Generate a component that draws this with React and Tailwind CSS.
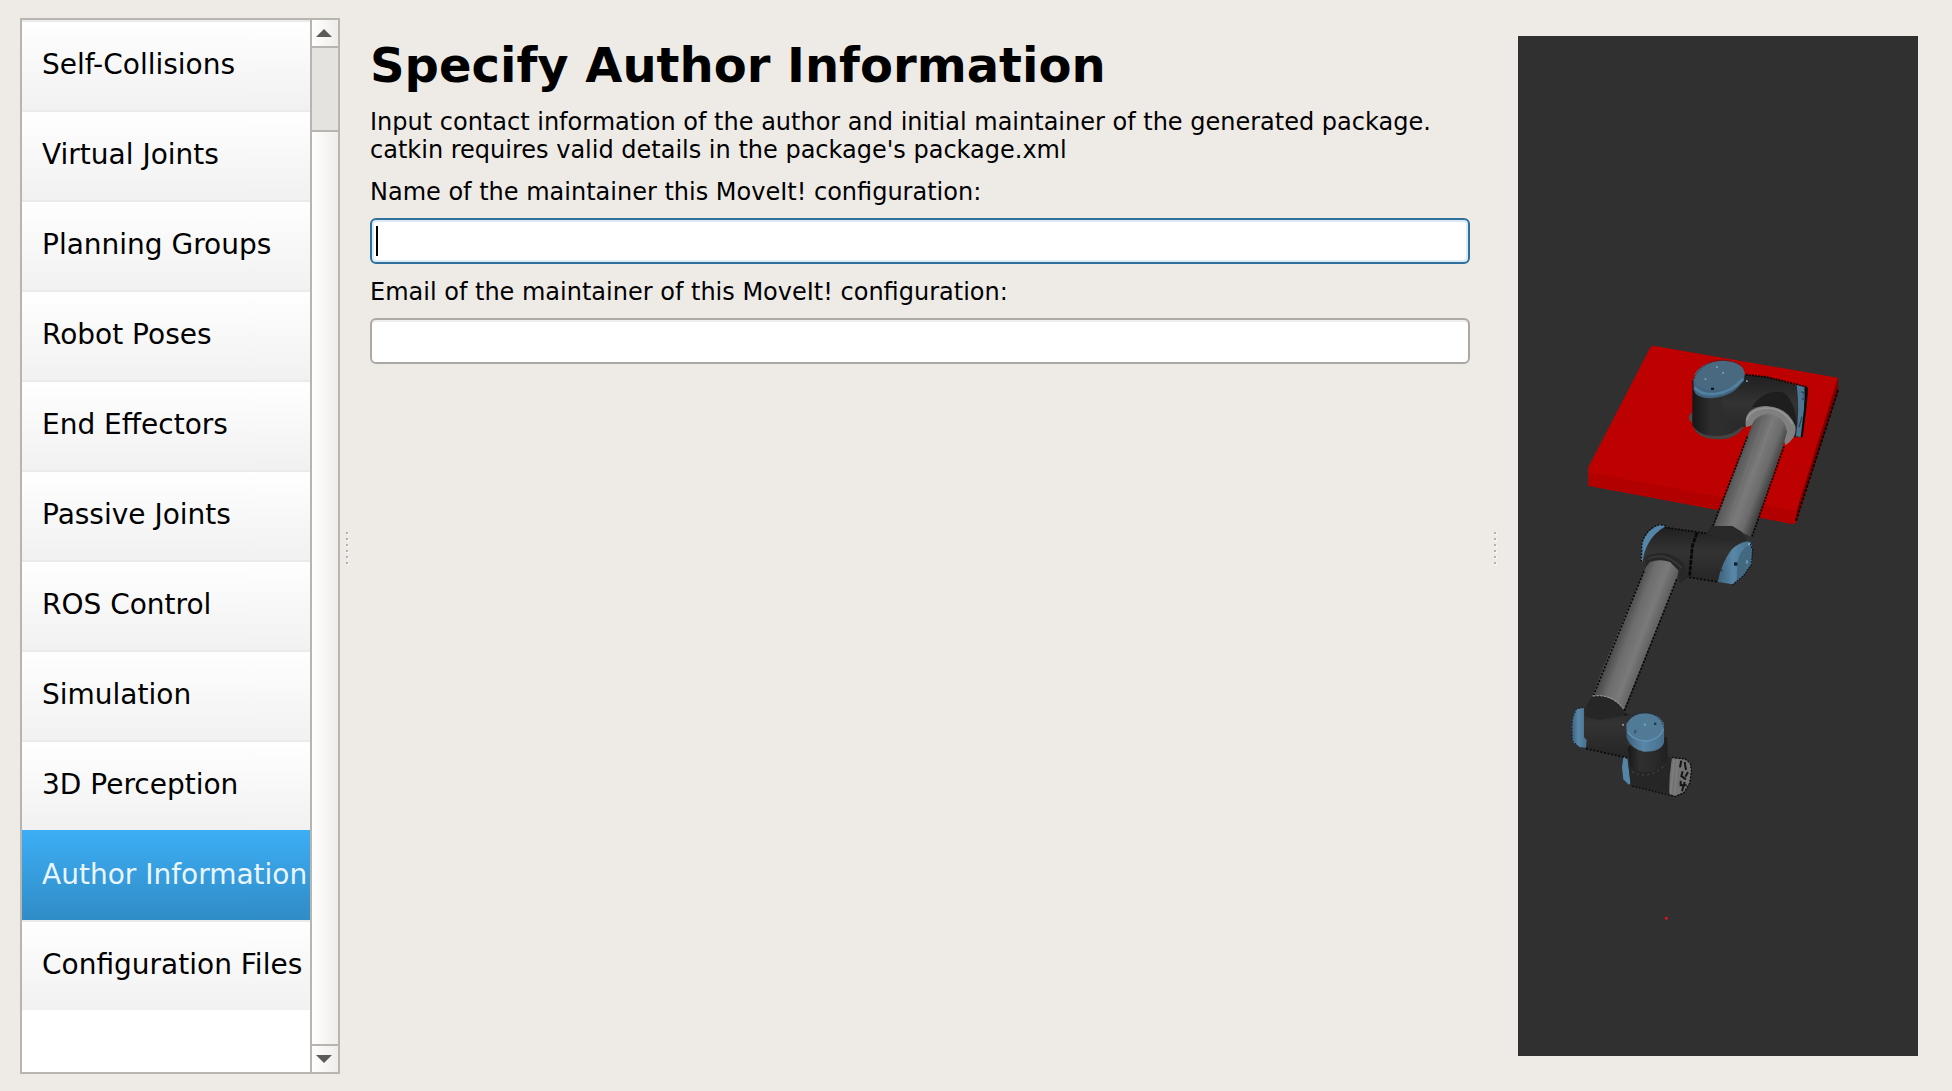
import React, { useState } from 'react';

const steps = [
  'Self-Collisions',
  'Virtual Joints',
  'Planning Groups',
  'Robot Poses',
  'End Effectors',
  'Passive Joints',
  'ROS Control',
  'Simulation',
  '3D Perception',
  'Author Information',
  'Configuration Files',
];

function ScrollBar() {
  return (
    <div className="flex w-7 shrink-0 flex-col border-l-2 border-[#b8b5b1] bg-gradient-to-r from-white to-[#efede9]">
      <button aria-label="Scroll up" className="flex h-7 items-center justify-center border-b-2 border-[#b8b5b1] pr-0.5">
        <svg className="h-2 w-4" viewBox="0 0 16 8" aria-hidden="true">
          <path d="M0 8 8 0 16 8Z" fill="#5b5a58" />
        </svg>
      </button>
      <div className="h-[84px] border-b-2 border-[#b8b5b1] bg-[#e4e3df]" />
      <div className="flex-1" />
      <button aria-label="Scroll down" className="flex h-7 items-center justify-center border-t-2 border-[#b8b5b1] pr-0.5">
        <svg className="h-2 w-4" viewBox="0 0 16 8" aria-hidden="true">
          <path d="M0 0 8 8 16 0Z" fill="#5b5a58" />
        </svg>
      </button>
    </div>
  );
}

function StepList({ current, onSelect }) {
  return (
    <nav className="flex w-80 shrink-0 border-2 border-[#b8b5b1] bg-white">
      <ul className="min-w-0 flex-1">
        {steps.map((step) => (
          <li key={step}>
            <button
              onClick={() => onSelect(step)}
              aria-current={step === current ? 'step' : undefined}
              className={
                step === current
                  ? 'flex h-[90px] w-full items-center whitespace-nowrap bg-gradient-to-b from-[#3daef5] to-[#308cc6] pl-5 text-[28px] text-[#eaf6ff]'
                  : 'flex h-[90px] w-full items-center whitespace-nowrap bg-gradient-to-b from-white to-[#f1f1f1] pl-5 text-[28px] shadow-[inset_0_2px_0_#ebebeb]'
              }
            >
              {step}
            </button>
          </li>
        ))}
      </ul>
      <ScrollBar />
    </nav>
  );
}

function Splitter() {
  return (
    <div className="flex w-3.5 shrink-0 flex-col items-center justify-center gap-1 pt-1" role="separator" aria-orientation="vertical">
      {[0, 1, 2, 3, 4, 5].map((n) => (
        <span key={n} className="size-0.5 bg-[#b5b2ae] shadow-[1px_1px_0_#fbfaf8]" />
      ))}
    </div>
  );
}

function RobotView() {
  return (
    <svg className="h-full w-full" viewBox="0 0 1200 3060" preserveAspectRatio="xMidYMid slice" role="img" aria-label="Robot arm preview">
      <defs>
        <linearGradient id="upperTube" gradientUnits="userSpaceOnUse" x1="490" y1="400" x2="610" y2="446">
          <stop offset="0" stopColor="#3c3c3c" />
          <stop offset="0.15" stopColor="#5c5c5c" />
          <stop offset="0.5" stopColor="#7a7a7a" />
          <stop offset="0.75" stopColor="#6c6c6c" />
          <stop offset="1" stopColor="#3a3a3a" />
        </linearGradient>
        <linearGradient id="lowerTube" gradientUnits="userSpaceOnUse" x1="195" y1="330" x2="312" y2="374">
          <stop offset="0" stopColor="#444" />
          <stop offset="0.3" stopColor="#6c6c6c" />
          <stop offset="0.6" stopColor="#7a7a7a" />
          <stop offset="0.85" stopColor="#606060" />
          <stop offset="1" stopColor="#333" />
        </linearGradient>
        <linearGradient id="shoulder" x1="0" y1="0" x2="1" y2="0">
          <stop offset="0" stopColor="#161616" />
          <stop offset="0.3" stopColor="#2f2f2f" />
          <stop offset="0.65" stopColor="#2b2b2b" />
          <stop offset="1" stopColor="#202020" />
        </linearGradient>
        <linearGradient id="housing" x1="0" y1="0" x2="0" y2="1">
          <stop offset="0" stopColor="#1f1f1f" />
          <stop offset="0.45" stopColor="#333" />
          <stop offset="1" stopColor="#252525" />
        </linearGradient>
        <linearGradient id="cap" x1="0" y1="0" x2="1" y2="0">
          <stop offset="0" stopColor="#3d6079" />
          <stop offset="0.45" stopColor="#5987a8" />
          <stop offset="1" stopColor="#466f8c" />
        </linearGradient>
      </defs>

      {/* base plate, shoulder and upper arm */}
      <g transform="translate(156 882)">
        <path d="M250 47 803 143V180L680 575 668 582 55 467V412L240 54Z" fill="#bd0000" />
        <path d="M62 428 678 542 672 582 55 467Z" fill="#b20000" />
        <path d="M803 145 805 182 676 578 680 540Z" fill="#7e0000" />
        <path d="M804 180 678 572" stroke="#100" strokeWidth="6" strokeDasharray="9 4" />
        <path d="M368 245q-16 12-10 26l14 10Z" fill="#4b4b4b" />
        <path d="M368 262V288Q385 328 442 328T522 290Z" fill="#444" />
        <path d="M367 150V286Q388 319 440 319 490 318 520 286L560 240 524 135Z" fill="url(#shoulder)" />
        <path d="M455 200 524 134 588 140 678 165 712 172 694 322 640 320 560 260 525 292Q480 290 462 262Z" fill="url(#housing)" />
        <path d="M545 232Q580 178 635 186 672 200 682 290L650 262 590 228Z" fill="#1e1e1e" />
        <path d="M528 134 590 141 680 163 712 172 708 225" stroke="#050505" strokeWidth="5" strokeDasharray="6 3" fill="none" />
        <path d="M680 165 704 172 706 222 694 322 678 318Q690 240 680 165Z" fill="#4d7591" />
        <path d="M704 172 713 177 709 236 698 322 692 322 702 236Z" fill="#0b0b0b" />
        <path d="M694 185 703 190V210L696 205M687 292 696 260" stroke="#25465c" strokeWidth="4" fill="none" />
        <path d="M370 146 371 180Q378 204 420 205 468 202 496 180L522 152 524 125Z" fill="#416580" />
        <ellipse cx="448" cy="137" rx="76" ry="44" transform="rotate(-8 448 137)" fill="#496980" />
        <path d="M374 172Q392 196 436 192 486 186 519 146" stroke="#52809f" strokeWidth="8" fill="none" />
        <path d="M372 146Q390 108 430 94 480 84 516 108" stroke="#162b38" strokeWidth="3" strokeDasharray="4 4" fill="none" />
        <g fill="#78a8c8">
          <rect x="438" y="109" width="5" height="5" />
          <rect x="457" y="126" width="5" height="5" />
          <rect x="404" y="145" width="5" height="5" />
          <rect x="528" y="151" width="5" height="5" />
        </g>
        <rect x="423" y="173" width="9" height="7" fill="#0d161c" />
        <path d="M528 292Q518 232 588 228 652 230 676 288 682 324 646 346L630 290 550 284Z" fill="#808080" />
        <path d="M530 272Q538 238 588 234 640 234 668 282" stroke="#959595" strokeWidth="5" fill="none" />
        <path d="M546 284Q556 256 592 252 640 254 651 305L640 346 545 622 500 600 430 590Z" fill="url(#upperTube)" />
        <path d="M580 270 480 560M606 270 506 570" stroke="#8a8a8a" strokeWidth="2" opacity="0.4" />
        <path d="M532 320 426 596M642 350 545 622" stroke="#050505" strokeWidth="5" strokeDasharray="6 4" fill="none" />
      </g>

      {/* elbow */}
      <g transform="translate(126 1392)">
        <path d="M318 78 300 74Q262 84 246 130L243 186 262 180 318 84Z" fill="#5484a6" />
        <path d="M244 185 246 128Q262 82 300 74L318 78" stroke="#0a0f12" strokeWidth="4" strokeDasharray="5 5" fill="none" />
        <path d="M312 82 405 96 440 100 456 78 515 78 545 95 560 122 510 150 474 246 385 232 360 250 352 210Q330 180 290 180L258 205 247 190Q256 116 312 82Z" fill="url(#housing)" />
        <path d="M442 102 458 78 518 79 548 98 560 124 500 120Z" fill="#292929" />
        <path d="M258 170Q320 140 372 190L384 232 358 248 352 208Q330 180 290 180L256 205Z" fill="#272727" />
        <path d="M262 178Q315 150 366 205" stroke="#383838" strokeWidth="5" fill="none" />
        <path d="M314 82 440 100" stroke="#080808" strokeWidth="5" strokeDasharray="6 4" />
        <path d="M411 98 397 138 389 226" stroke="#080808" strokeWidth="8" strokeDasharray="14 3" fill="none" />
        <path d="M388 232 474 246" stroke="#080808" strokeWidth="5" strokeDasharray="6 5" />
        <path d="M570 122Q530 128 512 152 484 190 473 246L518 253 548 228 575 190 576 140Z" fill="url(#cap)" />
        <path d="M566 136Q538 150 532 190L530 246 552 224 575 186 574 140Z" fill="#426981" />
        <path d="M566 124 578 150 574 196 550 228 518 254" stroke="#081016" strokeWidth="4" strokeDasharray="4 5" fill="none" />
        <rect x="522" y="187" width="10" height="10" fill="#10202c" />
        <rect x="558" y="181" width="6" height="10" fill="#6796b5" />
        <rect x="564" y="128" width="6" height="8" fill="#76a9ca" />
        <rect x="483" y="209" width="5" height="5" fill="#253f52" />
      </g>

      {/* forearm and wrist */}
      <g transform="translate(126 1392)">
        <path d="M258 200 270 186Q300 176 330 186L356 212 352 232 190 632Q158 590 96 588L132 494Z" fill="url(#lowerTube)" />
        <path d="M252 214 98 592M350 238 192 636" stroke="#070707" strokeWidth="5" strokeDasharray="6 5" />
      </g>
      <g transform="translate(126 1872)">
        <path d="M190 292H202L212 370 206 374 190 358 186 322Z" fill="#5484a6" />
        <path d="M202 285 245 262 320 230 324 290 384 306 350 402 325 402 212 378Z" fill="#262626" />
        <path d="M336 294 372 298 388 306 394 330 388 370 372 396 346 408 328 402Q326 350 336 294Z" fill="#737373" />
        <path d="M342 300 332 400M352 300 344 404" stroke="#858585" strokeWidth="4" opacity="0.7" />
        <path d="M364 302 360 322M374 306 378 330M368 334 364 348 378 358M384 336 376 350M362 362V376L380 376M374 366 366 394" stroke="#151515" strokeWidth="6" fill="none" />
        <path d="M336 292 376 297 392 312 394 336 389 370 372 398 346 410 216 378" stroke="#090909" strokeWidth="4" strokeDasharray="5 5" fill="none" />
        <path d="M202 260 212 320Q265 360 322 302V230Z" fill="url(#shoulder)" />
        <path d="M215 334Q265 364 318 312" stroke="#3c3c3c" strokeWidth="4" strokeDasharray="8 8" fill="none" />
        <path d="M98 108Q155 102 190 148L196 166 206 292 165 286 76 264 70 150Z" fill="url(#housing)" />
        <path d="M78 148 98 112Q155 102 190 148L196 166 120 180 76 170Z" fill="#262626" />
        <path d="M98 108Q155 100 190 146" stroke="#8c8c8c" strokeWidth="4" strokeDasharray="8 3" fill="none" />
        <path d="M78 266 204 294M194 164H206" stroke="#080808" strokeWidth="5" strokeDasharray="6 5" />
        <path d="M50 146 72 143V232L80 240 78 263 58 261 38 246 35 200Q36 164 50 146Z" fill="url(#cap)" />
        <path d="M70 143 50 146 37 178 36 240 60 264" stroke="#10222e" strokeWidth="3" strokeDasharray="5 5" fill="none" />
        <path d="M198 190 312 188V248Q302 276 252 275 214 268 200 234Z" fill="url(#cap)" />
        <ellipse cx="256" cy="201" rx="56" ry="41" fill="#507a96" />
        <path d="M202 215Q222 245 264 243 302 235 310 208" stroke="#6494b5" strokeWidth="4" fill="none" />
        <path d="M200 182Q218 160 256 158 300 162 312 202" stroke="#152b38" strokeWidth="3" strokeDasharray="5 4" fill="none" />
        <rect x="251" y="191" width="7" height="6" fill="#70a5c8" />
        <rect x="222" y="210" width="7" height="10" fill="#365a73" />
        <rect x="282" y="188" width="7" height="7" fill="#203b4c" />
        <rect x="186" y="192" width="6" height="5" fill="#999" />
      </g>

      <rect x="441" y="2643" width="8" height="8" fill="#e0131d" />
    </svg>
  );
}

const inputBase = 'h-[46px] w-full rounded-md border-2 bg-white px-2 text-2xl outline-none';

export default function App() {
  const [current, setCurrent] = useState('Author Information');
  const [name, setName] = useState('');
  const [email, setEmail] = useState('');

  return (
    <div className="flex h-screen bg-[#eeebe6] pl-5 pr-[34px] font-['DejaVu_Sans',sans-serif] text-black">
      <div className="flex pb-[17px] pt-[18px]">
        <StepList current={current} onSelect={setCurrent} />
      </div>
      <Splitter />
      <main className="flex min-w-0 flex-1 flex-col gap-3.5 pl-4 pr-[18px] pt-9">
        <h1 className="text-[48px] font-bold leading-[58px]">Specify Author Information</h1>
        <p className="text-2xl leading-7">
          Input contact information of the author and initial maintainer of the generated package.
          <br />
          catkin requires valid details in the package's package.xml
        </p>
        <div className="flex flex-col gap-3">
          <label htmlFor="name" className="text-2xl leading-7">
            Name of the maintainer this MoveIt! configuration:
          </label>
          <div className="relative">
            <input
              id="name"
              type="text"
              value={name}
              onChange={(e) => setName(e.target.value)}
              className={`${inputBase} border-[#306f9b] caret-transparent shadow-[inset_0_0_0_2px_#dcebf5]`}
            />
            {name === '' && <span className="pointer-events-none absolute inset-y-2 left-1.5 w-0.5 bg-black" />}
          </div>
        </div>
        <div className="flex flex-col gap-3">
          <label htmlFor="email" className="text-2xl leading-7">
            Email of the maintainer of this MoveIt! configuration:
          </label>
          <input
            id="email"
            type="email"
            value={email}
            onChange={(e) => setEmail(e.target.value)}
            className={`${inputBase} border-[#aca8a4] shadow-[inset_0_2px_0_#f0eeec]`}
          />
        </div>
      </main>
      <Splitter />
      <div className="flex pb-[35px] pl-4 pt-9">
        <section className="w-[400px] overflow-hidden bg-[#303030]">
          <RobotView />
        </section>
      </div>
    </div>
  );
}
